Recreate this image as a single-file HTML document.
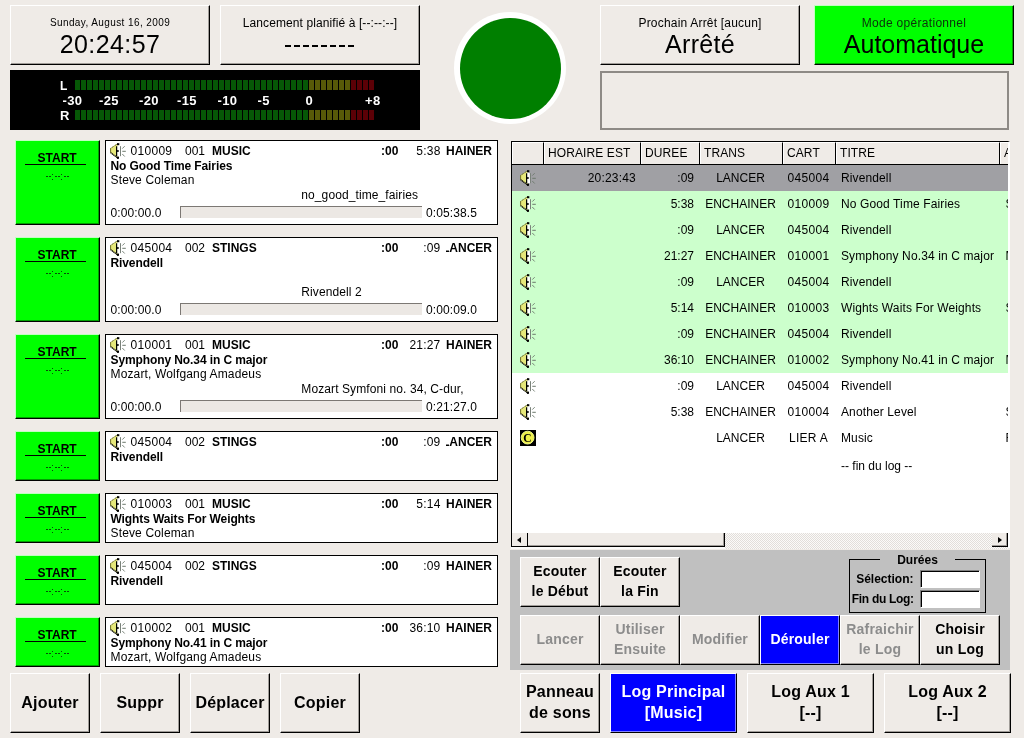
<!DOCTYPE html>
<html><head><meta charset="utf-8">
<style>
*{margin:0;padding:0;box-sizing:border-box}
html,body{width:1024px;height:738px;overflow:hidden;background:#efebe7;font-family:"Liberation Sans",sans-serif;color:#000}
#root{position:absolute;left:0;top:0;width:1024px;height:738px;background:#efebe7;will-change:transform;overflow:hidden}
.a{position:absolute}
.rz{position:absolute;background:#efebe7;border-top:1px solid #fff;border-left:1px solid #fff;border-right:1px solid #000;border-bottom:1px solid #000;box-shadow:inset -1px -1px 0 #a09c98}
.t{position:absolute;white-space:nowrap;line-height:1;font-variant-ligatures:none}
.b{font-weight:bold}
.c{text-align:center}
.r{text-align:right}
.clip{overflow:hidden}
</style></head><body><div id="root">

<div class="rz" style="left:10px;top:5px;width:200px;height:60px;"></div>
<div class="t c" style="left:10px;top:18.34px;width:200px;font-size:10px;letter-spacing:0.4px">Sunday, August 16, 2009</div>
<div class="t c" style="left:10px;top:31.84px;width:200px;font-size:25px;letter-spacing:0.4px">20:24:57</div>
<div class="rz" style="left:220px;top:5px;width:200px;height:60px;"></div>
<div class="t c" style="left:220px;top:16.84px;width:200px;font-size:12px;letter-spacing:0.1px">Lancement planifié à [--:--:--]</div>
<div class="a" style="left:285px;top:45px;width:6px;height:2px;background:#000;"></div>
<div class="a" style="left:294px;top:45px;width:6px;height:2px;background:#000;"></div>
<div class="a" style="left:303px;top:45px;width:6px;height:2px;background:#000;"></div>
<div class="a" style="left:312px;top:45px;width:6px;height:2px;background:#000;"></div>
<div class="a" style="left:321px;top:45px;width:6px;height:2px;background:#000;"></div>
<div class="a" style="left:330px;top:45px;width:6px;height:2px;background:#000;"></div>
<div class="a" style="left:339px;top:45px;width:6px;height:2px;background:#000;"></div>
<div class="a" style="left:348px;top:45px;width:6px;height:2px;background:#000;"></div>
<div class="a" style="left:10px;top:70px;width:410px;height:60px;background:#000;"></div>
<div class="a" style="left:75px;top:80px;width:5px;height:10px;background:#065806;"></div>
<div class="a" style="left:75px;top:110px;width:5px;height:10px;background:#065806;"></div>
<div class="a" style="left:81px;top:80px;width:5px;height:10px;background:#065806;"></div>
<div class="a" style="left:81px;top:110px;width:5px;height:10px;background:#065806;"></div>
<div class="a" style="left:87px;top:80px;width:5px;height:10px;background:#065806;"></div>
<div class="a" style="left:87px;top:110px;width:5px;height:10px;background:#065806;"></div>
<div class="a" style="left:93px;top:80px;width:5px;height:10px;background:#065806;"></div>
<div class="a" style="left:93px;top:110px;width:5px;height:10px;background:#065806;"></div>
<div class="a" style="left:99px;top:80px;width:5px;height:10px;background:#065806;"></div>
<div class="a" style="left:99px;top:110px;width:5px;height:10px;background:#065806;"></div>
<div class="a" style="left:105px;top:80px;width:5px;height:10px;background:#065806;"></div>
<div class="a" style="left:105px;top:110px;width:5px;height:10px;background:#065806;"></div>
<div class="a" style="left:111px;top:80px;width:5px;height:10px;background:#065806;"></div>
<div class="a" style="left:111px;top:110px;width:5px;height:10px;background:#065806;"></div>
<div class="a" style="left:117px;top:80px;width:5px;height:10px;background:#065806;"></div>
<div class="a" style="left:117px;top:110px;width:5px;height:10px;background:#065806;"></div>
<div class="a" style="left:123px;top:80px;width:5px;height:10px;background:#065806;"></div>
<div class="a" style="left:123px;top:110px;width:5px;height:10px;background:#065806;"></div>
<div class="a" style="left:129px;top:80px;width:5px;height:10px;background:#065806;"></div>
<div class="a" style="left:129px;top:110px;width:5px;height:10px;background:#065806;"></div>
<div class="a" style="left:135px;top:80px;width:5px;height:10px;background:#065806;"></div>
<div class="a" style="left:135px;top:110px;width:5px;height:10px;background:#065806;"></div>
<div class="a" style="left:141px;top:80px;width:5px;height:10px;background:#065806;"></div>
<div class="a" style="left:141px;top:110px;width:5px;height:10px;background:#065806;"></div>
<div class="a" style="left:147px;top:80px;width:5px;height:10px;background:#065806;"></div>
<div class="a" style="left:147px;top:110px;width:5px;height:10px;background:#065806;"></div>
<div class="a" style="left:153px;top:80px;width:5px;height:10px;background:#065806;"></div>
<div class="a" style="left:153px;top:110px;width:5px;height:10px;background:#065806;"></div>
<div class="a" style="left:159px;top:80px;width:5px;height:10px;background:#065806;"></div>
<div class="a" style="left:159px;top:110px;width:5px;height:10px;background:#065806;"></div>
<div class="a" style="left:165px;top:80px;width:5px;height:10px;background:#065806;"></div>
<div class="a" style="left:165px;top:110px;width:5px;height:10px;background:#065806;"></div>
<div class="a" style="left:171px;top:80px;width:5px;height:10px;background:#065806;"></div>
<div class="a" style="left:171px;top:110px;width:5px;height:10px;background:#065806;"></div>
<div class="a" style="left:177px;top:80px;width:5px;height:10px;background:#065806;"></div>
<div class="a" style="left:177px;top:110px;width:5px;height:10px;background:#065806;"></div>
<div class="a" style="left:183px;top:80px;width:5px;height:10px;background:#065806;"></div>
<div class="a" style="left:183px;top:110px;width:5px;height:10px;background:#065806;"></div>
<div class="a" style="left:189px;top:80px;width:5px;height:10px;background:#065806;"></div>
<div class="a" style="left:189px;top:110px;width:5px;height:10px;background:#065806;"></div>
<div class="a" style="left:195px;top:80px;width:5px;height:10px;background:#065806;"></div>
<div class="a" style="left:195px;top:110px;width:5px;height:10px;background:#065806;"></div>
<div class="a" style="left:201px;top:80px;width:5px;height:10px;background:#065806;"></div>
<div class="a" style="left:201px;top:110px;width:5px;height:10px;background:#065806;"></div>
<div class="a" style="left:207px;top:80px;width:5px;height:10px;background:#065806;"></div>
<div class="a" style="left:207px;top:110px;width:5px;height:10px;background:#065806;"></div>
<div class="a" style="left:213px;top:80px;width:5px;height:10px;background:#065806;"></div>
<div class="a" style="left:213px;top:110px;width:5px;height:10px;background:#065806;"></div>
<div class="a" style="left:219px;top:80px;width:5px;height:10px;background:#065806;"></div>
<div class="a" style="left:219px;top:110px;width:5px;height:10px;background:#065806;"></div>
<div class="a" style="left:225px;top:80px;width:5px;height:10px;background:#065806;"></div>
<div class="a" style="left:225px;top:110px;width:5px;height:10px;background:#065806;"></div>
<div class="a" style="left:231px;top:80px;width:5px;height:10px;background:#065806;"></div>
<div class="a" style="left:231px;top:110px;width:5px;height:10px;background:#065806;"></div>
<div class="a" style="left:237px;top:80px;width:5px;height:10px;background:#065806;"></div>
<div class="a" style="left:237px;top:110px;width:5px;height:10px;background:#065806;"></div>
<div class="a" style="left:243px;top:80px;width:5px;height:10px;background:#065806;"></div>
<div class="a" style="left:243px;top:110px;width:5px;height:10px;background:#065806;"></div>
<div class="a" style="left:249px;top:80px;width:5px;height:10px;background:#065806;"></div>
<div class="a" style="left:249px;top:110px;width:5px;height:10px;background:#065806;"></div>
<div class="a" style="left:255px;top:80px;width:5px;height:10px;background:#065806;"></div>
<div class="a" style="left:255px;top:110px;width:5px;height:10px;background:#065806;"></div>
<div class="a" style="left:261px;top:80px;width:5px;height:10px;background:#065806;"></div>
<div class="a" style="left:261px;top:110px;width:5px;height:10px;background:#065806;"></div>
<div class="a" style="left:267px;top:80px;width:5px;height:10px;background:#065806;"></div>
<div class="a" style="left:267px;top:110px;width:5px;height:10px;background:#065806;"></div>
<div class="a" style="left:273px;top:80px;width:5px;height:10px;background:#065806;"></div>
<div class="a" style="left:273px;top:110px;width:5px;height:10px;background:#065806;"></div>
<div class="a" style="left:279px;top:80px;width:5px;height:10px;background:#065806;"></div>
<div class="a" style="left:279px;top:110px;width:5px;height:10px;background:#065806;"></div>
<div class="a" style="left:285px;top:80px;width:5px;height:10px;background:#065806;"></div>
<div class="a" style="left:285px;top:110px;width:5px;height:10px;background:#065806;"></div>
<div class="a" style="left:291px;top:80px;width:5px;height:10px;background:#065806;"></div>
<div class="a" style="left:291px;top:110px;width:5px;height:10px;background:#065806;"></div>
<div class="a" style="left:297px;top:80px;width:5px;height:10px;background:#065806;"></div>
<div class="a" style="left:297px;top:110px;width:5px;height:10px;background:#065806;"></div>
<div class="a" style="left:303px;top:80px;width:5px;height:10px;background:#065806;"></div>
<div class="a" style="left:303px;top:110px;width:5px;height:10px;background:#065806;"></div>
<div class="a" style="left:309px;top:80px;width:5px;height:10px;background:#585a08;"></div>
<div class="a" style="left:309px;top:110px;width:5px;height:10px;background:#585a08;"></div>
<div class="a" style="left:315px;top:80px;width:5px;height:10px;background:#585a08;"></div>
<div class="a" style="left:315px;top:110px;width:5px;height:10px;background:#585a08;"></div>
<div class="a" style="left:321px;top:80px;width:5px;height:10px;background:#585a08;"></div>
<div class="a" style="left:321px;top:110px;width:5px;height:10px;background:#585a08;"></div>
<div class="a" style="left:327px;top:80px;width:5px;height:10px;background:#585a08;"></div>
<div class="a" style="left:327px;top:110px;width:5px;height:10px;background:#585a08;"></div>
<div class="a" style="left:333px;top:80px;width:5px;height:10px;background:#585a08;"></div>
<div class="a" style="left:333px;top:110px;width:5px;height:10px;background:#585a08;"></div>
<div class="a" style="left:339px;top:80px;width:5px;height:10px;background:#585a08;"></div>
<div class="a" style="left:339px;top:110px;width:5px;height:10px;background:#585a08;"></div>
<div class="a" style="left:345px;top:80px;width:5px;height:10px;background:#585a08;"></div>
<div class="a" style="left:345px;top:110px;width:5px;height:10px;background:#585a08;"></div>
<div class="a" style="left:351px;top:80px;width:5px;height:10px;background:#5c0006;"></div>
<div class="a" style="left:351px;top:110px;width:5px;height:10px;background:#5c0006;"></div>
<div class="a" style="left:357px;top:80px;width:5px;height:10px;background:#5c0006;"></div>
<div class="a" style="left:357px;top:110px;width:5px;height:10px;background:#5c0006;"></div>
<div class="a" style="left:363px;top:80px;width:5px;height:10px;background:#5c0006;"></div>
<div class="a" style="left:363px;top:110px;width:5px;height:10px;background:#5c0006;"></div>
<div class="a" style="left:369px;top:80px;width:5px;height:10px;background:#5c0006;"></div>
<div class="a" style="left:369px;top:110px;width:5px;height:10px;background:#5c0006;"></div>
<div class="t b" style="left:60px;top:79.84px;font-size:12px;color:#fff">L</div>
<div class="t b" style="left:60px;top:109.0px;font-size:13px;color:#fff">R</div>
<div class="t b" style="left:62.5px;top:94.0px;font-size:13px;color:#fff;letter-spacing:0.3px">-30</div>
<div class="t b" style="left:99px;top:94.0px;font-size:13px;color:#fff;letter-spacing:0.3px">-25</div>
<div class="t b" style="left:139px;top:94.0px;font-size:13px;color:#fff;letter-spacing:0.3px">-20</div>
<div class="t b" style="left:177px;top:94.0px;font-size:13px;color:#fff;letter-spacing:0.3px">-15</div>
<div class="t b" style="left:217.5px;top:94.0px;font-size:13px;color:#fff;letter-spacing:0.3px">-10</div>
<div class="t b" style="left:257.5px;top:94.0px;font-size:13px;color:#fff;letter-spacing:0.3px">-5</div>
<div class="t b" style="left:305.5px;top:94.0px;font-size:13px;color:#fff;letter-spacing:0.3px">0</div>
<div class="t b" style="left:365px;top:94.0px;font-size:13px;color:#fff;letter-spacing:0.3px">+8</div>
<div class="a" style="left:454px;top:12px;width:112px;height:112px;border-radius:50%;background:#fff"></div>
<div class="a" style="left:459.5px;top:17.5px;width:101px;height:101px;border-radius:50%;background:#007f00"></div>
<div class="rz" style="left:600px;top:5px;width:200px;height:60px;"></div>
<div class="t c" style="left:600px;top:16.64px;width:200px;font-size:12px;letter-spacing:0.2px">Prochain Arrêt [aucun]</div>
<div class="t c" style="left:600px;top:32.14px;width:200px;font-size:25px;letter-spacing:0.3px">Arrêté</div>
<div class="rz" style="left:814px;top:5px;width:200px;height:60px;background:#00ff00;border-top-color:#c0ffc0;border-left-color:#c0ffc0;box-shadow:inset -1px -1px 0 #00a000"></div>
<div class="t c" style="left:814px;top:16.64px;width:200px;font-size:12px;color:#0c300c;letter-spacing:0.3px">Mode opérationnel</div>
<div class="t c" style="left:814px;top:31.84px;width:200px;font-size:25px;">Automatique</div>
<div class="a" style="left:600px;top:71px;width:409px;height:59px;border:2px solid #8e8a86"></div>
<div class="rz" style="left:15px;top:140px;width:85px;height:85px;background:#00ff00;border-top-color:#c0ffc0;border-left-color:#c0ffc0;box-shadow:inset -1px -1px 0 #00a000"></div>
<div class="t b c" style="left:14.6px;top:151.84px;width:85px;font-size:12px;">START</div>
<div class="a" style="left:25px;top:164px;width:61px;height:1px;background:#000;"></div>
<div class="a" style="left:46px;top:176px;width:2px;height:1px;background:#084808;"></div>
<div class="a" style="left:49px;top:176px;width:2px;height:1px;background:#084808;"></div>
<div class="a" style="left:55px;top:176px;width:2px;height:1px;background:#084808;"></div>
<div class="a" style="left:58px;top:176px;width:2px;height:1px;background:#084808;"></div>
<div class="a" style="left:64px;top:176px;width:2px;height:1px;background:#084808;"></div>
<div class="a" style="left:67px;top:176px;width:2px;height:1px;background:#084808;"></div>
<div class="a" style="left:52px;top:174px;width:1px;height:1px;background:#084808;"></div>
<div class="a" style="left:52px;top:179px;width:1px;height:1px;background:#084808;"></div>
<div class="a" style="left:61px;top:174px;width:1px;height:1px;background:#084808;"></div>
<div class="a" style="left:61px;top:179px;width:1px;height:1px;background:#084808;"></div>
<div class="a" style="left:105px;top:140px;width:393px;height:85px;background:#fff;border:1px solid #000"></div>
<svg class="a" style="left:110px;top:143px" width="17" height="17" viewBox="0 0 17 17"><polygon points="0.4,5.4 7.6,0.6 8,15.6 0.4,9.6" fill="#e6e87a"/><line x1="0.4" y1="5.5" x2="7.8" y2="0.6" stroke="#5a5a20" stroke-width="1" stroke-dasharray="1.2,0.6"/><line x1="0.4" y1="9.5" x2="8.2" y2="15.4" stroke="#000" stroke-width="1.2" stroke-dasharray="1.4,0.4"/><line x1="0.6" y1="5.4" x2="0.6" y2="9.6" stroke="#6a6a28" stroke-width="1"/><path d="M7.2,2.5 L9.8,3.2 L10,13.2 L7.2,13.6 Z" fill="#fff"/><line x1="6.6" y1="3.2" x2="6.6" y2="13.2" stroke="#000" stroke-width="1.2"/><rect x="7" y="0.2" width="2.3" height="2" fill="#000"/><rect x="7" y="13.6" width="2" height="2.2" fill="#000"/><circle cx="7.9" cy="7.9" r="1" fill="#000"/><line x1="10.5" y1="3.2" x2="10.5" y2="13.2" stroke="#7a827a" stroke-width="1"/><line x1="12.3" y1="5.6" x2="14.7" y2="3.2" stroke="#6c786c" stroke-width="0.9"/><line x1="12.3" y1="8.3" x2="15.8" y2="8.3" stroke="#6c786c" stroke-width="1"/><line x1="12.3" y1="11" x2="14.7" y2="13.5" stroke="#6c786c" stroke-width="0.9"/></svg>
<div class="t " style="left:130.5px;top:144.64px;font-size:12px;letter-spacing:0.3px">010009</div>
<div class="t " style="left:185px;top:144.64px;font-size:12px;">001</div>
<div class="t b" style="left:212px;top:144.64px;font-size:12px;">MUSIC</div>
<div class="t b" style="left:381px;top:144.64px;font-size:12px;">:00</div>
<div class="t r" style="left:390px;top:144.64px;width:50.5px;font-size:12px;letter-spacing:0.2px">5:38</div>
<div class="t b clip" style="left:446px;top:144.64px;width:46px;font-size:12px;direction:rtl;height:14px">ENCHAINER</div>
<div class="t b" style="left:110.5px;top:159.54px;font-size:12px;letter-spacing:-0.1px">No Good Time Fairies</div>
<div class="t " style="left:110.5px;top:174.44px;font-size:12px;letter-spacing:0.15px">Steve Coleman</div>
<div class="t " style="left:301.3px;top:188.84px;font-size:12px;letter-spacing:0.1px">no_good_time_fairies</div>
<div class="a" style="left:180px;top:206px;width:242px;height:12px;background:#ece8e4;border-top:1px solid #7c7874;border-left:1px solid #7c7874"></div>
<div class="t " style="left:110.5px;top:206.64px;font-size:12px;letter-spacing:0.1px">0:00:00.0</div>
<div class="t " style="left:426px;top:206.64px;font-size:12px;letter-spacing:0.1px">0:05:38.5</div>
<div class="rz" style="left:15px;top:237px;width:85px;height:85px;background:#00ff00;border-top-color:#c0ffc0;border-left-color:#c0ffc0;box-shadow:inset -1px -1px 0 #00a000"></div>
<div class="t b c" style="left:14.6px;top:248.84px;width:85px;font-size:12px;">START</div>
<div class="a" style="left:25px;top:261px;width:61px;height:1px;background:#000;"></div>
<div class="a" style="left:46px;top:273px;width:2px;height:1px;background:#084808;"></div>
<div class="a" style="left:49px;top:273px;width:2px;height:1px;background:#084808;"></div>
<div class="a" style="left:55px;top:273px;width:2px;height:1px;background:#084808;"></div>
<div class="a" style="left:58px;top:273px;width:2px;height:1px;background:#084808;"></div>
<div class="a" style="left:64px;top:273px;width:2px;height:1px;background:#084808;"></div>
<div class="a" style="left:67px;top:273px;width:2px;height:1px;background:#084808;"></div>
<div class="a" style="left:52px;top:271px;width:1px;height:1px;background:#084808;"></div>
<div class="a" style="left:52px;top:276px;width:1px;height:1px;background:#084808;"></div>
<div class="a" style="left:61px;top:271px;width:1px;height:1px;background:#084808;"></div>
<div class="a" style="left:61px;top:276px;width:1px;height:1px;background:#084808;"></div>
<div class="a" style="left:105px;top:237px;width:393px;height:85px;background:#fff;border:1px solid #000"></div>
<svg class="a" style="left:110px;top:240px" width="17" height="17" viewBox="0 0 17 17"><polygon points="0.4,5.4 7.6,0.6 8,15.6 0.4,9.6" fill="#e6e87a"/><line x1="0.4" y1="5.5" x2="7.8" y2="0.6" stroke="#5a5a20" stroke-width="1" stroke-dasharray="1.2,0.6"/><line x1="0.4" y1="9.5" x2="8.2" y2="15.4" stroke="#000" stroke-width="1.2" stroke-dasharray="1.4,0.4"/><line x1="0.6" y1="5.4" x2="0.6" y2="9.6" stroke="#6a6a28" stroke-width="1"/><path d="M7.2,2.5 L9.8,3.2 L10,13.2 L7.2,13.6 Z" fill="#fff"/><line x1="6.6" y1="3.2" x2="6.6" y2="13.2" stroke="#000" stroke-width="1.2"/><rect x="7" y="0.2" width="2.3" height="2" fill="#000"/><rect x="7" y="13.6" width="2" height="2.2" fill="#000"/><circle cx="7.9" cy="7.9" r="1" fill="#000"/><line x1="10.5" y1="3.2" x2="10.5" y2="13.2" stroke="#7a827a" stroke-width="1"/><line x1="12.3" y1="5.6" x2="14.7" y2="3.2" stroke="#6c786c" stroke-width="0.9"/><line x1="12.3" y1="8.3" x2="15.8" y2="8.3" stroke="#6c786c" stroke-width="1"/><line x1="12.3" y1="11" x2="14.7" y2="13.5" stroke="#6c786c" stroke-width="0.9"/></svg>
<div class="t " style="left:130.5px;top:241.64px;font-size:12px;letter-spacing:0.3px">045004</div>
<div class="t " style="left:185px;top:241.64px;font-size:12px;">002</div>
<div class="t b" style="left:212px;top:241.64px;font-size:12px;">STINGS</div>
<div class="t b" style="left:381px;top:241.64px;font-size:12px;">:00</div>
<div class="t r" style="left:390px;top:241.64px;width:50.5px;font-size:12px;letter-spacing:0.2px">:09</div>
<div class="t b clip" style="left:446px;top:241.64px;width:46px;font-size:12px;direction:rtl;height:14px">LANCER</div>
<div class="t b" style="left:110.5px;top:256.54px;font-size:12px;letter-spacing:-0.1px">Rivendell</div>
<div class="t " style="left:301.3px;top:285.84px;font-size:12px;letter-spacing:0.1px">Rivendell 2</div>
<div class="a" style="left:180px;top:303px;width:242px;height:12px;background:#ece8e4;border-top:1px solid #7c7874;border-left:1px solid #7c7874"></div>
<div class="t " style="left:110.5px;top:303.64px;font-size:12px;letter-spacing:0.1px">0:00:00.0</div>
<div class="t " style="left:426px;top:303.64px;font-size:12px;letter-spacing:0.1px">0:00:09.0</div>
<div class="rz" style="left:15px;top:334px;width:85px;height:85px;background:#00ff00;border-top-color:#c0ffc0;border-left-color:#c0ffc0;box-shadow:inset -1px -1px 0 #00a000"></div>
<div class="t b c" style="left:14.6px;top:345.84px;width:85px;font-size:12px;">START</div>
<div class="a" style="left:25px;top:358px;width:61px;height:1px;background:#000;"></div>
<div class="a" style="left:46px;top:370px;width:2px;height:1px;background:#084808;"></div>
<div class="a" style="left:49px;top:370px;width:2px;height:1px;background:#084808;"></div>
<div class="a" style="left:55px;top:370px;width:2px;height:1px;background:#084808;"></div>
<div class="a" style="left:58px;top:370px;width:2px;height:1px;background:#084808;"></div>
<div class="a" style="left:64px;top:370px;width:2px;height:1px;background:#084808;"></div>
<div class="a" style="left:67px;top:370px;width:2px;height:1px;background:#084808;"></div>
<div class="a" style="left:52px;top:368px;width:1px;height:1px;background:#084808;"></div>
<div class="a" style="left:52px;top:373px;width:1px;height:1px;background:#084808;"></div>
<div class="a" style="left:61px;top:368px;width:1px;height:1px;background:#084808;"></div>
<div class="a" style="left:61px;top:373px;width:1px;height:1px;background:#084808;"></div>
<div class="a" style="left:105px;top:334px;width:393px;height:85px;background:#fff;border:1px solid #000"></div>
<svg class="a" style="left:110px;top:337px" width="17" height="17" viewBox="0 0 17 17"><polygon points="0.4,5.4 7.6,0.6 8,15.6 0.4,9.6" fill="#e6e87a"/><line x1="0.4" y1="5.5" x2="7.8" y2="0.6" stroke="#5a5a20" stroke-width="1" stroke-dasharray="1.2,0.6"/><line x1="0.4" y1="9.5" x2="8.2" y2="15.4" stroke="#000" stroke-width="1.2" stroke-dasharray="1.4,0.4"/><line x1="0.6" y1="5.4" x2="0.6" y2="9.6" stroke="#6a6a28" stroke-width="1"/><path d="M7.2,2.5 L9.8,3.2 L10,13.2 L7.2,13.6 Z" fill="#fff"/><line x1="6.6" y1="3.2" x2="6.6" y2="13.2" stroke="#000" stroke-width="1.2"/><rect x="7" y="0.2" width="2.3" height="2" fill="#000"/><rect x="7" y="13.6" width="2" height="2.2" fill="#000"/><circle cx="7.9" cy="7.9" r="1" fill="#000"/><line x1="10.5" y1="3.2" x2="10.5" y2="13.2" stroke="#7a827a" stroke-width="1"/><line x1="12.3" y1="5.6" x2="14.7" y2="3.2" stroke="#6c786c" stroke-width="0.9"/><line x1="12.3" y1="8.3" x2="15.8" y2="8.3" stroke="#6c786c" stroke-width="1"/><line x1="12.3" y1="11" x2="14.7" y2="13.5" stroke="#6c786c" stroke-width="0.9"/></svg>
<div class="t " style="left:130.5px;top:338.64px;font-size:12px;letter-spacing:0.3px">010001</div>
<div class="t " style="left:185px;top:338.64px;font-size:12px;">001</div>
<div class="t b" style="left:212px;top:338.64px;font-size:12px;">MUSIC</div>
<div class="t b" style="left:381px;top:338.64px;font-size:12px;">:00</div>
<div class="t r" style="left:390px;top:338.64px;width:50.5px;font-size:12px;letter-spacing:0.2px">21:27</div>
<div class="t b clip" style="left:446px;top:338.64px;width:46px;font-size:12px;direction:rtl;height:14px">ENCHAINER</div>
<div class="t b" style="left:110.5px;top:353.54px;font-size:12px;letter-spacing:-0.1px">Symphony No.34 in C major</div>
<div class="t " style="left:110.5px;top:368.44px;font-size:12px;letter-spacing:0.15px">Mozart, Wolfgang Amadeus</div>
<div class="t " style="left:301.3px;top:382.84px;font-size:12px;letter-spacing:0.1px">Mozart Symfoni no. 34, C-dur,</div>
<div class="a" style="left:180px;top:400px;width:242px;height:12px;background:#ece8e4;border-top:1px solid #7c7874;border-left:1px solid #7c7874"></div>
<div class="t " style="left:110.5px;top:400.64px;font-size:12px;letter-spacing:0.1px">0:00:00.0</div>
<div class="t " style="left:426px;top:400.64px;font-size:12px;letter-spacing:0.1px">0:21:27.0</div>
<div class="rz" style="left:15px;top:431px;width:85px;height:50px;background:#00ff00;border-top-color:#c0ffc0;border-left-color:#c0ffc0;box-shadow:inset -1px -1px 0 #00a000"></div>
<div class="t b c" style="left:14.6px;top:442.84px;width:85px;font-size:12px;">START</div>
<div class="a" style="left:25px;top:455px;width:61px;height:1px;background:#000;"></div>
<div class="a" style="left:46px;top:467px;width:2px;height:1px;background:#084808;"></div>
<div class="a" style="left:49px;top:467px;width:2px;height:1px;background:#084808;"></div>
<div class="a" style="left:55px;top:467px;width:2px;height:1px;background:#084808;"></div>
<div class="a" style="left:58px;top:467px;width:2px;height:1px;background:#084808;"></div>
<div class="a" style="left:64px;top:467px;width:2px;height:1px;background:#084808;"></div>
<div class="a" style="left:67px;top:467px;width:2px;height:1px;background:#084808;"></div>
<div class="a" style="left:52px;top:465px;width:1px;height:1px;background:#084808;"></div>
<div class="a" style="left:52px;top:470px;width:1px;height:1px;background:#084808;"></div>
<div class="a" style="left:61px;top:465px;width:1px;height:1px;background:#084808;"></div>
<div class="a" style="left:61px;top:470px;width:1px;height:1px;background:#084808;"></div>
<div class="a" style="left:105px;top:431px;width:393px;height:50px;background:#fff;border:1px solid #000"></div>
<svg class="a" style="left:110px;top:434px" width="17" height="17" viewBox="0 0 17 17"><polygon points="0.4,5.4 7.6,0.6 8,15.6 0.4,9.6" fill="#e6e87a"/><line x1="0.4" y1="5.5" x2="7.8" y2="0.6" stroke="#5a5a20" stroke-width="1" stroke-dasharray="1.2,0.6"/><line x1="0.4" y1="9.5" x2="8.2" y2="15.4" stroke="#000" stroke-width="1.2" stroke-dasharray="1.4,0.4"/><line x1="0.6" y1="5.4" x2="0.6" y2="9.6" stroke="#6a6a28" stroke-width="1"/><path d="M7.2,2.5 L9.8,3.2 L10,13.2 L7.2,13.6 Z" fill="#fff"/><line x1="6.6" y1="3.2" x2="6.6" y2="13.2" stroke="#000" stroke-width="1.2"/><rect x="7" y="0.2" width="2.3" height="2" fill="#000"/><rect x="7" y="13.6" width="2" height="2.2" fill="#000"/><circle cx="7.9" cy="7.9" r="1" fill="#000"/><line x1="10.5" y1="3.2" x2="10.5" y2="13.2" stroke="#7a827a" stroke-width="1"/><line x1="12.3" y1="5.6" x2="14.7" y2="3.2" stroke="#6c786c" stroke-width="0.9"/><line x1="12.3" y1="8.3" x2="15.8" y2="8.3" stroke="#6c786c" stroke-width="1"/><line x1="12.3" y1="11" x2="14.7" y2="13.5" stroke="#6c786c" stroke-width="0.9"/></svg>
<div class="t " style="left:130.5px;top:435.64px;font-size:12px;letter-spacing:0.3px">045004</div>
<div class="t " style="left:185px;top:435.64px;font-size:12px;">002</div>
<div class="t b" style="left:212px;top:435.64px;font-size:12px;">STINGS</div>
<div class="t b" style="left:381px;top:435.64px;font-size:12px;">:00</div>
<div class="t r" style="left:390px;top:435.64px;width:50.5px;font-size:12px;letter-spacing:0.2px">:09</div>
<div class="t b clip" style="left:446px;top:435.64px;width:46px;font-size:12px;direction:rtl;height:14px">LANCER</div>
<div class="t b" style="left:110.5px;top:450.54px;font-size:12px;letter-spacing:-0.1px">Rivendell</div>
<div class="rz" style="left:15px;top:493px;width:85px;height:50px;background:#00ff00;border-top-color:#c0ffc0;border-left-color:#c0ffc0;box-shadow:inset -1px -1px 0 #00a000"></div>
<div class="t b c" style="left:14.6px;top:504.84px;width:85px;font-size:12px;">START</div>
<div class="a" style="left:25px;top:517px;width:61px;height:1px;background:#000;"></div>
<div class="a" style="left:46px;top:529px;width:2px;height:1px;background:#084808;"></div>
<div class="a" style="left:49px;top:529px;width:2px;height:1px;background:#084808;"></div>
<div class="a" style="left:55px;top:529px;width:2px;height:1px;background:#084808;"></div>
<div class="a" style="left:58px;top:529px;width:2px;height:1px;background:#084808;"></div>
<div class="a" style="left:64px;top:529px;width:2px;height:1px;background:#084808;"></div>
<div class="a" style="left:67px;top:529px;width:2px;height:1px;background:#084808;"></div>
<div class="a" style="left:52px;top:527px;width:1px;height:1px;background:#084808;"></div>
<div class="a" style="left:52px;top:532px;width:1px;height:1px;background:#084808;"></div>
<div class="a" style="left:61px;top:527px;width:1px;height:1px;background:#084808;"></div>
<div class="a" style="left:61px;top:532px;width:1px;height:1px;background:#084808;"></div>
<div class="a" style="left:105px;top:493px;width:393px;height:50px;background:#fff;border:1px solid #000"></div>
<svg class="a" style="left:110px;top:496px" width="17" height="17" viewBox="0 0 17 17"><polygon points="0.4,5.4 7.6,0.6 8,15.6 0.4,9.6" fill="#e6e87a"/><line x1="0.4" y1="5.5" x2="7.8" y2="0.6" stroke="#5a5a20" stroke-width="1" stroke-dasharray="1.2,0.6"/><line x1="0.4" y1="9.5" x2="8.2" y2="15.4" stroke="#000" stroke-width="1.2" stroke-dasharray="1.4,0.4"/><line x1="0.6" y1="5.4" x2="0.6" y2="9.6" stroke="#6a6a28" stroke-width="1"/><path d="M7.2,2.5 L9.8,3.2 L10,13.2 L7.2,13.6 Z" fill="#fff"/><line x1="6.6" y1="3.2" x2="6.6" y2="13.2" stroke="#000" stroke-width="1.2"/><rect x="7" y="0.2" width="2.3" height="2" fill="#000"/><rect x="7" y="13.6" width="2" height="2.2" fill="#000"/><circle cx="7.9" cy="7.9" r="1" fill="#000"/><line x1="10.5" y1="3.2" x2="10.5" y2="13.2" stroke="#7a827a" stroke-width="1"/><line x1="12.3" y1="5.6" x2="14.7" y2="3.2" stroke="#6c786c" stroke-width="0.9"/><line x1="12.3" y1="8.3" x2="15.8" y2="8.3" stroke="#6c786c" stroke-width="1"/><line x1="12.3" y1="11" x2="14.7" y2="13.5" stroke="#6c786c" stroke-width="0.9"/></svg>
<div class="t " style="left:130.5px;top:497.64px;font-size:12px;letter-spacing:0.3px">010003</div>
<div class="t " style="left:185px;top:497.64px;font-size:12px;">001</div>
<div class="t b" style="left:212px;top:497.64px;font-size:12px;">MUSIC</div>
<div class="t b" style="left:381px;top:497.64px;font-size:12px;">:00</div>
<div class="t r" style="left:390px;top:497.64px;width:50.5px;font-size:12px;letter-spacing:0.2px">5:14</div>
<div class="t b clip" style="left:446px;top:497.64px;width:46px;font-size:12px;direction:rtl;height:14px">ENCHAINER</div>
<div class="t b" style="left:110.5px;top:512.54px;font-size:12px;letter-spacing:-0.1px">Wights Waits For Weights</div>
<div class="t " style="left:110.5px;top:527.44px;font-size:12px;letter-spacing:0.15px">Steve Coleman</div>
<div class="rz" style="left:15px;top:555px;width:85px;height:50px;background:#00ff00;border-top-color:#c0ffc0;border-left-color:#c0ffc0;box-shadow:inset -1px -1px 0 #00a000"></div>
<div class="t b c" style="left:14.6px;top:566.84px;width:85px;font-size:12px;">START</div>
<div class="a" style="left:25px;top:579px;width:61px;height:1px;background:#000;"></div>
<div class="a" style="left:46px;top:591px;width:2px;height:1px;background:#084808;"></div>
<div class="a" style="left:49px;top:591px;width:2px;height:1px;background:#084808;"></div>
<div class="a" style="left:55px;top:591px;width:2px;height:1px;background:#084808;"></div>
<div class="a" style="left:58px;top:591px;width:2px;height:1px;background:#084808;"></div>
<div class="a" style="left:64px;top:591px;width:2px;height:1px;background:#084808;"></div>
<div class="a" style="left:67px;top:591px;width:2px;height:1px;background:#084808;"></div>
<div class="a" style="left:52px;top:589px;width:1px;height:1px;background:#084808;"></div>
<div class="a" style="left:52px;top:594px;width:1px;height:1px;background:#084808;"></div>
<div class="a" style="left:61px;top:589px;width:1px;height:1px;background:#084808;"></div>
<div class="a" style="left:61px;top:594px;width:1px;height:1px;background:#084808;"></div>
<div class="a" style="left:105px;top:555px;width:393px;height:50px;background:#fff;border:1px solid #000"></div>
<svg class="a" style="left:110px;top:558px" width="17" height="17" viewBox="0 0 17 17"><polygon points="0.4,5.4 7.6,0.6 8,15.6 0.4,9.6" fill="#e6e87a"/><line x1="0.4" y1="5.5" x2="7.8" y2="0.6" stroke="#5a5a20" stroke-width="1" stroke-dasharray="1.2,0.6"/><line x1="0.4" y1="9.5" x2="8.2" y2="15.4" stroke="#000" stroke-width="1.2" stroke-dasharray="1.4,0.4"/><line x1="0.6" y1="5.4" x2="0.6" y2="9.6" stroke="#6a6a28" stroke-width="1"/><path d="M7.2,2.5 L9.8,3.2 L10,13.2 L7.2,13.6 Z" fill="#fff"/><line x1="6.6" y1="3.2" x2="6.6" y2="13.2" stroke="#000" stroke-width="1.2"/><rect x="7" y="0.2" width="2.3" height="2" fill="#000"/><rect x="7" y="13.6" width="2" height="2.2" fill="#000"/><circle cx="7.9" cy="7.9" r="1" fill="#000"/><line x1="10.5" y1="3.2" x2="10.5" y2="13.2" stroke="#7a827a" stroke-width="1"/><line x1="12.3" y1="5.6" x2="14.7" y2="3.2" stroke="#6c786c" stroke-width="0.9"/><line x1="12.3" y1="8.3" x2="15.8" y2="8.3" stroke="#6c786c" stroke-width="1"/><line x1="12.3" y1="11" x2="14.7" y2="13.5" stroke="#6c786c" stroke-width="0.9"/></svg>
<div class="t " style="left:130.5px;top:559.64px;font-size:12px;letter-spacing:0.3px">045004</div>
<div class="t " style="left:185px;top:559.64px;font-size:12px;">002</div>
<div class="t b" style="left:212px;top:559.64px;font-size:12px;">STINGS</div>
<div class="t b" style="left:381px;top:559.64px;font-size:12px;">:00</div>
<div class="t r" style="left:390px;top:559.64px;width:50.5px;font-size:12px;letter-spacing:0.2px">:09</div>
<div class="t b clip" style="left:446px;top:559.64px;width:46px;font-size:12px;direction:rtl;height:14px">ENCHAINER</div>
<div class="t b" style="left:110.5px;top:574.54px;font-size:12px;letter-spacing:-0.1px">Rivendell</div>
<div class="rz" style="left:15px;top:617px;width:85px;height:50px;background:#00ff00;border-top-color:#c0ffc0;border-left-color:#c0ffc0;box-shadow:inset -1px -1px 0 #00a000"></div>
<div class="t b c" style="left:14.6px;top:628.84px;width:85px;font-size:12px;">START</div>
<div class="a" style="left:25px;top:641px;width:61px;height:1px;background:#000;"></div>
<div class="a" style="left:46px;top:653px;width:2px;height:1px;background:#084808;"></div>
<div class="a" style="left:49px;top:653px;width:2px;height:1px;background:#084808;"></div>
<div class="a" style="left:55px;top:653px;width:2px;height:1px;background:#084808;"></div>
<div class="a" style="left:58px;top:653px;width:2px;height:1px;background:#084808;"></div>
<div class="a" style="left:64px;top:653px;width:2px;height:1px;background:#084808;"></div>
<div class="a" style="left:67px;top:653px;width:2px;height:1px;background:#084808;"></div>
<div class="a" style="left:52px;top:651px;width:1px;height:1px;background:#084808;"></div>
<div class="a" style="left:52px;top:656px;width:1px;height:1px;background:#084808;"></div>
<div class="a" style="left:61px;top:651px;width:1px;height:1px;background:#084808;"></div>
<div class="a" style="left:61px;top:656px;width:1px;height:1px;background:#084808;"></div>
<div class="a" style="left:105px;top:617px;width:393px;height:50px;background:#fff;border:1px solid #000"></div>
<svg class="a" style="left:110px;top:620px" width="17" height="17" viewBox="0 0 17 17"><polygon points="0.4,5.4 7.6,0.6 8,15.6 0.4,9.6" fill="#e6e87a"/><line x1="0.4" y1="5.5" x2="7.8" y2="0.6" stroke="#5a5a20" stroke-width="1" stroke-dasharray="1.2,0.6"/><line x1="0.4" y1="9.5" x2="8.2" y2="15.4" stroke="#000" stroke-width="1.2" stroke-dasharray="1.4,0.4"/><line x1="0.6" y1="5.4" x2="0.6" y2="9.6" stroke="#6a6a28" stroke-width="1"/><path d="M7.2,2.5 L9.8,3.2 L10,13.2 L7.2,13.6 Z" fill="#fff"/><line x1="6.6" y1="3.2" x2="6.6" y2="13.2" stroke="#000" stroke-width="1.2"/><rect x="7" y="0.2" width="2.3" height="2" fill="#000"/><rect x="7" y="13.6" width="2" height="2.2" fill="#000"/><circle cx="7.9" cy="7.9" r="1" fill="#000"/><line x1="10.5" y1="3.2" x2="10.5" y2="13.2" stroke="#7a827a" stroke-width="1"/><line x1="12.3" y1="5.6" x2="14.7" y2="3.2" stroke="#6c786c" stroke-width="0.9"/><line x1="12.3" y1="8.3" x2="15.8" y2="8.3" stroke="#6c786c" stroke-width="1"/><line x1="12.3" y1="11" x2="14.7" y2="13.5" stroke="#6c786c" stroke-width="0.9"/></svg>
<div class="t " style="left:130.5px;top:621.64px;font-size:12px;letter-spacing:0.3px">010002</div>
<div class="t " style="left:185px;top:621.64px;font-size:12px;">001</div>
<div class="t b" style="left:212px;top:621.64px;font-size:12px;">MUSIC</div>
<div class="t b" style="left:381px;top:621.64px;font-size:12px;">:00</div>
<div class="t r" style="left:390px;top:621.64px;width:50.5px;font-size:12px;letter-spacing:0.2px">36:10</div>
<div class="t b clip" style="left:446px;top:621.64px;width:46px;font-size:12px;direction:rtl;height:14px">ENCHAINER</div>
<div class="t b" style="left:110.5px;top:636.54px;font-size:12px;letter-spacing:-0.1px">Symphony No.41 in C major</div>
<div class="t " style="left:110.5px;top:651.44px;font-size:12px;letter-spacing:0.15px">Mozart, Wolfgang Amadeus</div>
<div class="a" style="left:511px;top:141px;width:499px;height:407px;background:#fff;border:1px solid #000;border-right:2px solid #fff;border-bottom:1px solid #fff;box-shadow:inset 0 -1px 0 #000"></div>
<div class="a clip" style="left:512px;top:142px;width:496px;height:23px;border-bottom:1px solid #000;background:#efebe7">
<div class="a clip" style="left:0px;top:0;width:32px;height:22px;border-left:1px solid #fff;border-top:1px solid #fff;border-right:1px solid #000">
</div>
<div class="a clip" style="left:32px;top:0;width:97px;height:22px;border-left:1px solid #fff;border-top:1px solid #fff;border-right:1px solid #000">
<div class="t" style="left:3px;top:4px;font-size:12px;letter-spacing:0.1px">HORAIRE EST</div>
</div>
<div class="a clip" style="left:129px;top:0;width:59px;height:22px;border-left:1px solid #fff;border-top:1px solid #fff;border-right:1px solid #000">
<div class="t" style="left:3px;top:4px;font-size:12px;letter-spacing:0.1px">DUREE</div>
</div>
<div class="a clip" style="left:188px;top:0;width:83px;height:22px;border-left:1px solid #fff;border-top:1px solid #fff;border-right:1px solid #000">
<div class="t" style="left:3px;top:4px;font-size:12px;letter-spacing:0.1px">TRANS</div>
</div>
<div class="a clip" style="left:271px;top:0;width:53px;height:22px;border-left:1px solid #fff;border-top:1px solid #fff;border-right:1px solid #000">
<div class="t" style="left:3px;top:4px;font-size:12px;letter-spacing:0.1px">CART</div>
</div>
<div class="a clip" style="left:324px;top:0;width:164px;height:22px;border-left:1px solid #fff;border-top:1px solid #fff;border-right:1px solid #000">
<div class="t" style="left:3px;top:4px;font-size:12px;letter-spacing:0.1px">TITRE</div>
</div>
<div class="a clip" style="left:488px;top:0;width:31px;height:22px;border-left:1px solid #fff;border-top:1px solid #fff;border-right:1px solid #000">
<div class="t" style="left:3px;top:4px;font-size:12px;letter-spacing:0.1px">A</div>
</div>
</div>
<div class="a clip" style="left:512px;top:165px;width:496px;height:368px">
<div class="a" style="left:0;top:0px;width:496px;height:26px;background:#a0a0a4">
<svg class="a" style="left:8px;top:5px" width="17" height="17" viewBox="0 0 17 17"><polygon points="0.4,5.4 7.6,0.6 8,15.6 0.4,9.6" fill="#e6e87a"/><line x1="0.4" y1="5.5" x2="7.8" y2="0.6" stroke="#5a5a20" stroke-width="1" stroke-dasharray="1.2,0.6"/><line x1="0.4" y1="9.5" x2="8.2" y2="15.4" stroke="#000" stroke-width="1.2" stroke-dasharray="1.4,0.4"/><line x1="0.6" y1="5.4" x2="0.6" y2="9.6" stroke="#6a6a28" stroke-width="1"/><path d="M7.2,2.5 L9.8,3.2 L10,13.2 L7.2,13.6 Z" fill="#fff"/><line x1="6.6" y1="3.2" x2="6.6" y2="13.2" stroke="#000" stroke-width="1.2"/><rect x="7" y="0.2" width="2.3" height="2" fill="#000"/><rect x="7" y="13.6" width="2" height="2.2" fill="#000"/><circle cx="7.9" cy="7.9" r="1" fill="#000"/><line x1="10.5" y1="3.2" x2="10.5" y2="13.2" stroke="#7a827a" stroke-width="1"/><line x1="12.3" y1="5.6" x2="14.7" y2="3.2" stroke="#6c786c" stroke-width="0.9"/><line x1="12.3" y1="8.3" x2="15.8" y2="8.3" stroke="#6c786c" stroke-width="1"/><line x1="12.3" y1="11" x2="14.7" y2="13.5" stroke="#6c786c" stroke-width="0.9"/></svg>
<div class="t r" style="left:31px;top:7px;width:93px;font-size:12px;letter-spacing:0.2px">20:23:43</div>
<div class="t r" style="left:128px;top:7px;width:54px;font-size:12px">:09</div>
<div class="t c" style="left:187px;top:7px;width:83px;font-size:12px">LANCER</div>
<div class="t c" style="left:270px;top:7px;width:53px;font-size:12px;letter-spacing:0.3px">045004</div>
<div class="t" style="left:329px;top:7px;font-size:12px;letter-spacing:0.12px">Rivendell</div>
</div>
<div class="a" style="left:0;top:26px;width:496px;height:26px;background:#ccffcc">
<svg class="a" style="left:8px;top:5px" width="17" height="17" viewBox="0 0 17 17"><polygon points="0.4,5.4 7.6,0.6 8,15.6 0.4,9.6" fill="#e6e87a"/><line x1="0.4" y1="5.5" x2="7.8" y2="0.6" stroke="#5a5a20" stroke-width="1" stroke-dasharray="1.2,0.6"/><line x1="0.4" y1="9.5" x2="8.2" y2="15.4" stroke="#000" stroke-width="1.2" stroke-dasharray="1.4,0.4"/><line x1="0.6" y1="5.4" x2="0.6" y2="9.6" stroke="#6a6a28" stroke-width="1"/><path d="M7.2,2.5 L9.8,3.2 L10,13.2 L7.2,13.6 Z" fill="#fff"/><line x1="6.6" y1="3.2" x2="6.6" y2="13.2" stroke="#000" stroke-width="1.2"/><rect x="7" y="0.2" width="2.3" height="2" fill="#000"/><rect x="7" y="13.6" width="2" height="2.2" fill="#000"/><circle cx="7.9" cy="7.9" r="1" fill="#000"/><line x1="10.5" y1="3.2" x2="10.5" y2="13.2" stroke="#7a827a" stroke-width="1"/><line x1="12.3" y1="5.6" x2="14.7" y2="3.2" stroke="#6c786c" stroke-width="0.9"/><line x1="12.3" y1="8.3" x2="15.8" y2="8.3" stroke="#6c786c" stroke-width="1"/><line x1="12.3" y1="11" x2="14.7" y2="13.5" stroke="#6c786c" stroke-width="0.9"/></svg>
<div class="t r" style="left:128px;top:7px;width:54px;font-size:12px">5:38</div>
<div class="t c" style="left:187px;top:7px;width:83px;font-size:12px">ENCHAINER</div>
<div class="t c" style="left:270px;top:7px;width:53px;font-size:12px;letter-spacing:0.3px">010009</div>
<div class="t" style="left:329px;top:7px;font-size:12px;letter-spacing:0.12px">No Good Time Fairies</div>
<div class="t" style="left:493.5px;top:7px;font-size:12px">S</div>
</div>
<div class="a" style="left:0;top:52px;width:496px;height:26px;background:#ccffcc">
<svg class="a" style="left:8px;top:5px" width="17" height="17" viewBox="0 0 17 17"><polygon points="0.4,5.4 7.6,0.6 8,15.6 0.4,9.6" fill="#e6e87a"/><line x1="0.4" y1="5.5" x2="7.8" y2="0.6" stroke="#5a5a20" stroke-width="1" stroke-dasharray="1.2,0.6"/><line x1="0.4" y1="9.5" x2="8.2" y2="15.4" stroke="#000" stroke-width="1.2" stroke-dasharray="1.4,0.4"/><line x1="0.6" y1="5.4" x2="0.6" y2="9.6" stroke="#6a6a28" stroke-width="1"/><path d="M7.2,2.5 L9.8,3.2 L10,13.2 L7.2,13.6 Z" fill="#fff"/><line x1="6.6" y1="3.2" x2="6.6" y2="13.2" stroke="#000" stroke-width="1.2"/><rect x="7" y="0.2" width="2.3" height="2" fill="#000"/><rect x="7" y="13.6" width="2" height="2.2" fill="#000"/><circle cx="7.9" cy="7.9" r="1" fill="#000"/><line x1="10.5" y1="3.2" x2="10.5" y2="13.2" stroke="#7a827a" stroke-width="1"/><line x1="12.3" y1="5.6" x2="14.7" y2="3.2" stroke="#6c786c" stroke-width="0.9"/><line x1="12.3" y1="8.3" x2="15.8" y2="8.3" stroke="#6c786c" stroke-width="1"/><line x1="12.3" y1="11" x2="14.7" y2="13.5" stroke="#6c786c" stroke-width="0.9"/></svg>
<div class="t r" style="left:128px;top:7px;width:54px;font-size:12px">:09</div>
<div class="t c" style="left:187px;top:7px;width:83px;font-size:12px">LANCER</div>
<div class="t c" style="left:270px;top:7px;width:53px;font-size:12px;letter-spacing:0.3px">045004</div>
<div class="t" style="left:329px;top:7px;font-size:12px;letter-spacing:0.12px">Rivendell</div>
</div>
<div class="a" style="left:0;top:78px;width:496px;height:26px;background:#ccffcc">
<svg class="a" style="left:8px;top:5px" width="17" height="17" viewBox="0 0 17 17"><polygon points="0.4,5.4 7.6,0.6 8,15.6 0.4,9.6" fill="#e6e87a"/><line x1="0.4" y1="5.5" x2="7.8" y2="0.6" stroke="#5a5a20" stroke-width="1" stroke-dasharray="1.2,0.6"/><line x1="0.4" y1="9.5" x2="8.2" y2="15.4" stroke="#000" stroke-width="1.2" stroke-dasharray="1.4,0.4"/><line x1="0.6" y1="5.4" x2="0.6" y2="9.6" stroke="#6a6a28" stroke-width="1"/><path d="M7.2,2.5 L9.8,3.2 L10,13.2 L7.2,13.6 Z" fill="#fff"/><line x1="6.6" y1="3.2" x2="6.6" y2="13.2" stroke="#000" stroke-width="1.2"/><rect x="7" y="0.2" width="2.3" height="2" fill="#000"/><rect x="7" y="13.6" width="2" height="2.2" fill="#000"/><circle cx="7.9" cy="7.9" r="1" fill="#000"/><line x1="10.5" y1="3.2" x2="10.5" y2="13.2" stroke="#7a827a" stroke-width="1"/><line x1="12.3" y1="5.6" x2="14.7" y2="3.2" stroke="#6c786c" stroke-width="0.9"/><line x1="12.3" y1="8.3" x2="15.8" y2="8.3" stroke="#6c786c" stroke-width="1"/><line x1="12.3" y1="11" x2="14.7" y2="13.5" stroke="#6c786c" stroke-width="0.9"/></svg>
<div class="t r" style="left:128px;top:7px;width:54px;font-size:12px">21:27</div>
<div class="t c" style="left:187px;top:7px;width:83px;font-size:12px">ENCHAINER</div>
<div class="t c" style="left:270px;top:7px;width:53px;font-size:12px;letter-spacing:0.3px">010001</div>
<div class="t" style="left:329px;top:7px;font-size:12px;letter-spacing:0.12px">Symphony No.34 in C major</div>
<div class="t" style="left:493.5px;top:7px;font-size:12px">M</div>
</div>
<div class="a" style="left:0;top:104px;width:496px;height:26px;background:#ccffcc">
<svg class="a" style="left:8px;top:5px" width="17" height="17" viewBox="0 0 17 17"><polygon points="0.4,5.4 7.6,0.6 8,15.6 0.4,9.6" fill="#e6e87a"/><line x1="0.4" y1="5.5" x2="7.8" y2="0.6" stroke="#5a5a20" stroke-width="1" stroke-dasharray="1.2,0.6"/><line x1="0.4" y1="9.5" x2="8.2" y2="15.4" stroke="#000" stroke-width="1.2" stroke-dasharray="1.4,0.4"/><line x1="0.6" y1="5.4" x2="0.6" y2="9.6" stroke="#6a6a28" stroke-width="1"/><path d="M7.2,2.5 L9.8,3.2 L10,13.2 L7.2,13.6 Z" fill="#fff"/><line x1="6.6" y1="3.2" x2="6.6" y2="13.2" stroke="#000" stroke-width="1.2"/><rect x="7" y="0.2" width="2.3" height="2" fill="#000"/><rect x="7" y="13.6" width="2" height="2.2" fill="#000"/><circle cx="7.9" cy="7.9" r="1" fill="#000"/><line x1="10.5" y1="3.2" x2="10.5" y2="13.2" stroke="#7a827a" stroke-width="1"/><line x1="12.3" y1="5.6" x2="14.7" y2="3.2" stroke="#6c786c" stroke-width="0.9"/><line x1="12.3" y1="8.3" x2="15.8" y2="8.3" stroke="#6c786c" stroke-width="1"/><line x1="12.3" y1="11" x2="14.7" y2="13.5" stroke="#6c786c" stroke-width="0.9"/></svg>
<div class="t r" style="left:128px;top:7px;width:54px;font-size:12px">:09</div>
<div class="t c" style="left:187px;top:7px;width:83px;font-size:12px">LANCER</div>
<div class="t c" style="left:270px;top:7px;width:53px;font-size:12px;letter-spacing:0.3px">045004</div>
<div class="t" style="left:329px;top:7px;font-size:12px;letter-spacing:0.12px">Rivendell</div>
</div>
<div class="a" style="left:0;top:130px;width:496px;height:26px;background:#ccffcc">
<svg class="a" style="left:8px;top:5px" width="17" height="17" viewBox="0 0 17 17"><polygon points="0.4,5.4 7.6,0.6 8,15.6 0.4,9.6" fill="#e6e87a"/><line x1="0.4" y1="5.5" x2="7.8" y2="0.6" stroke="#5a5a20" stroke-width="1" stroke-dasharray="1.2,0.6"/><line x1="0.4" y1="9.5" x2="8.2" y2="15.4" stroke="#000" stroke-width="1.2" stroke-dasharray="1.4,0.4"/><line x1="0.6" y1="5.4" x2="0.6" y2="9.6" stroke="#6a6a28" stroke-width="1"/><path d="M7.2,2.5 L9.8,3.2 L10,13.2 L7.2,13.6 Z" fill="#fff"/><line x1="6.6" y1="3.2" x2="6.6" y2="13.2" stroke="#000" stroke-width="1.2"/><rect x="7" y="0.2" width="2.3" height="2" fill="#000"/><rect x="7" y="13.6" width="2" height="2.2" fill="#000"/><circle cx="7.9" cy="7.9" r="1" fill="#000"/><line x1="10.5" y1="3.2" x2="10.5" y2="13.2" stroke="#7a827a" stroke-width="1"/><line x1="12.3" y1="5.6" x2="14.7" y2="3.2" stroke="#6c786c" stroke-width="0.9"/><line x1="12.3" y1="8.3" x2="15.8" y2="8.3" stroke="#6c786c" stroke-width="1"/><line x1="12.3" y1="11" x2="14.7" y2="13.5" stroke="#6c786c" stroke-width="0.9"/></svg>
<div class="t r" style="left:128px;top:7px;width:54px;font-size:12px">5:14</div>
<div class="t c" style="left:187px;top:7px;width:83px;font-size:12px">ENCHAINER</div>
<div class="t c" style="left:270px;top:7px;width:53px;font-size:12px;letter-spacing:0.3px">010003</div>
<div class="t" style="left:329px;top:7px;font-size:12px;letter-spacing:0.12px">Wights Waits For Weights</div>
<div class="t" style="left:493.5px;top:7px;font-size:12px">S</div>
</div>
<div class="a" style="left:0;top:156px;width:496px;height:26px;background:#ccffcc">
<svg class="a" style="left:8px;top:5px" width="17" height="17" viewBox="0 0 17 17"><polygon points="0.4,5.4 7.6,0.6 8,15.6 0.4,9.6" fill="#e6e87a"/><line x1="0.4" y1="5.5" x2="7.8" y2="0.6" stroke="#5a5a20" stroke-width="1" stroke-dasharray="1.2,0.6"/><line x1="0.4" y1="9.5" x2="8.2" y2="15.4" stroke="#000" stroke-width="1.2" stroke-dasharray="1.4,0.4"/><line x1="0.6" y1="5.4" x2="0.6" y2="9.6" stroke="#6a6a28" stroke-width="1"/><path d="M7.2,2.5 L9.8,3.2 L10,13.2 L7.2,13.6 Z" fill="#fff"/><line x1="6.6" y1="3.2" x2="6.6" y2="13.2" stroke="#000" stroke-width="1.2"/><rect x="7" y="0.2" width="2.3" height="2" fill="#000"/><rect x="7" y="13.6" width="2" height="2.2" fill="#000"/><circle cx="7.9" cy="7.9" r="1" fill="#000"/><line x1="10.5" y1="3.2" x2="10.5" y2="13.2" stroke="#7a827a" stroke-width="1"/><line x1="12.3" y1="5.6" x2="14.7" y2="3.2" stroke="#6c786c" stroke-width="0.9"/><line x1="12.3" y1="8.3" x2="15.8" y2="8.3" stroke="#6c786c" stroke-width="1"/><line x1="12.3" y1="11" x2="14.7" y2="13.5" stroke="#6c786c" stroke-width="0.9"/></svg>
<div class="t r" style="left:128px;top:7px;width:54px;font-size:12px">:09</div>
<div class="t c" style="left:187px;top:7px;width:83px;font-size:12px">ENCHAINER</div>
<div class="t c" style="left:270px;top:7px;width:53px;font-size:12px;letter-spacing:0.3px">045004</div>
<div class="t" style="left:329px;top:7px;font-size:12px;letter-spacing:0.12px">Rivendell</div>
</div>
<div class="a" style="left:0;top:182px;width:496px;height:26px;background:#ccffcc">
<svg class="a" style="left:8px;top:5px" width="17" height="17" viewBox="0 0 17 17"><polygon points="0.4,5.4 7.6,0.6 8,15.6 0.4,9.6" fill="#e6e87a"/><line x1="0.4" y1="5.5" x2="7.8" y2="0.6" stroke="#5a5a20" stroke-width="1" stroke-dasharray="1.2,0.6"/><line x1="0.4" y1="9.5" x2="8.2" y2="15.4" stroke="#000" stroke-width="1.2" stroke-dasharray="1.4,0.4"/><line x1="0.6" y1="5.4" x2="0.6" y2="9.6" stroke="#6a6a28" stroke-width="1"/><path d="M7.2,2.5 L9.8,3.2 L10,13.2 L7.2,13.6 Z" fill="#fff"/><line x1="6.6" y1="3.2" x2="6.6" y2="13.2" stroke="#000" stroke-width="1.2"/><rect x="7" y="0.2" width="2.3" height="2" fill="#000"/><rect x="7" y="13.6" width="2" height="2.2" fill="#000"/><circle cx="7.9" cy="7.9" r="1" fill="#000"/><line x1="10.5" y1="3.2" x2="10.5" y2="13.2" stroke="#7a827a" stroke-width="1"/><line x1="12.3" y1="5.6" x2="14.7" y2="3.2" stroke="#6c786c" stroke-width="0.9"/><line x1="12.3" y1="8.3" x2="15.8" y2="8.3" stroke="#6c786c" stroke-width="1"/><line x1="12.3" y1="11" x2="14.7" y2="13.5" stroke="#6c786c" stroke-width="0.9"/></svg>
<div class="t r" style="left:128px;top:7px;width:54px;font-size:12px">36:10</div>
<div class="t c" style="left:187px;top:7px;width:83px;font-size:12px">ENCHAINER</div>
<div class="t c" style="left:270px;top:7px;width:53px;font-size:12px;letter-spacing:0.3px">010002</div>
<div class="t" style="left:329px;top:7px;font-size:12px;letter-spacing:0.12px">Symphony No.41 in C major</div>
<div class="t" style="left:493.5px;top:7px;font-size:12px">M</div>
</div>
<div class="a" style="left:0;top:208px;width:496px;height:26px;background:#fff">
<svg class="a" style="left:8px;top:5px" width="17" height="17" viewBox="0 0 17 17"><polygon points="0.4,5.4 7.6,0.6 8,15.6 0.4,9.6" fill="#e6e87a"/><line x1="0.4" y1="5.5" x2="7.8" y2="0.6" stroke="#5a5a20" stroke-width="1" stroke-dasharray="1.2,0.6"/><line x1="0.4" y1="9.5" x2="8.2" y2="15.4" stroke="#000" stroke-width="1.2" stroke-dasharray="1.4,0.4"/><line x1="0.6" y1="5.4" x2="0.6" y2="9.6" stroke="#6a6a28" stroke-width="1"/><path d="M7.2,2.5 L9.8,3.2 L10,13.2 L7.2,13.6 Z" fill="#fff"/><line x1="6.6" y1="3.2" x2="6.6" y2="13.2" stroke="#000" stroke-width="1.2"/><rect x="7" y="0.2" width="2.3" height="2" fill="#000"/><rect x="7" y="13.6" width="2" height="2.2" fill="#000"/><circle cx="7.9" cy="7.9" r="1" fill="#000"/><line x1="10.5" y1="3.2" x2="10.5" y2="13.2" stroke="#7a827a" stroke-width="1"/><line x1="12.3" y1="5.6" x2="14.7" y2="3.2" stroke="#6c786c" stroke-width="0.9"/><line x1="12.3" y1="8.3" x2="15.8" y2="8.3" stroke="#6c786c" stroke-width="1"/><line x1="12.3" y1="11" x2="14.7" y2="13.5" stroke="#6c786c" stroke-width="0.9"/></svg>
<div class="t r" style="left:128px;top:7px;width:54px;font-size:12px">:09</div>
<div class="t c" style="left:187px;top:7px;width:83px;font-size:12px">LANCER</div>
<div class="t c" style="left:270px;top:7px;width:53px;font-size:12px;letter-spacing:0.3px">045004</div>
<div class="t" style="left:329px;top:7px;font-size:12px;letter-spacing:0.12px">Rivendell</div>
</div>
<div class="a" style="left:0;top:234px;width:496px;height:26px;background:#fff">
<svg class="a" style="left:8px;top:5px" width="17" height="17" viewBox="0 0 17 17"><polygon points="0.4,5.4 7.6,0.6 8,15.6 0.4,9.6" fill="#e6e87a"/><line x1="0.4" y1="5.5" x2="7.8" y2="0.6" stroke="#5a5a20" stroke-width="1" stroke-dasharray="1.2,0.6"/><line x1="0.4" y1="9.5" x2="8.2" y2="15.4" stroke="#000" stroke-width="1.2" stroke-dasharray="1.4,0.4"/><line x1="0.6" y1="5.4" x2="0.6" y2="9.6" stroke="#6a6a28" stroke-width="1"/><path d="M7.2,2.5 L9.8,3.2 L10,13.2 L7.2,13.6 Z" fill="#fff"/><line x1="6.6" y1="3.2" x2="6.6" y2="13.2" stroke="#000" stroke-width="1.2"/><rect x="7" y="0.2" width="2.3" height="2" fill="#000"/><rect x="7" y="13.6" width="2" height="2.2" fill="#000"/><circle cx="7.9" cy="7.9" r="1" fill="#000"/><line x1="10.5" y1="3.2" x2="10.5" y2="13.2" stroke="#7a827a" stroke-width="1"/><line x1="12.3" y1="5.6" x2="14.7" y2="3.2" stroke="#6c786c" stroke-width="0.9"/><line x1="12.3" y1="8.3" x2="15.8" y2="8.3" stroke="#6c786c" stroke-width="1"/><line x1="12.3" y1="11" x2="14.7" y2="13.5" stroke="#6c786c" stroke-width="0.9"/></svg>
<div class="t r" style="left:128px;top:7px;width:54px;font-size:12px">5:38</div>
<div class="t c" style="left:187px;top:7px;width:83px;font-size:12px">ENCHAINER</div>
<div class="t c" style="left:270px;top:7px;width:53px;font-size:12px;letter-spacing:0.3px">010004</div>
<div class="t" style="left:329px;top:7px;font-size:12px;letter-spacing:0.12px">Another Level</div>
<div class="t" style="left:493.5px;top:7px;font-size:12px">S</div>
</div>
<div class="a" style="left:0;top:260px;width:496px;height:26px;background:#fff">
<svg class="a" style="left:8px;top:5px" width="16" height="16"><rect width="16" height="16" fill="#000"/><circle cx="7.6" cy="7.6" r="6.4" fill="#eef048" stroke="#f0f890" stroke-width="1"/><text x="7.4" y="11.7" font-family="Liberation Serif" font-weight="bold" font-size="11.5" text-anchor="middle" fill="#000">C</text></svg>
<div class="t c" style="left:187px;top:7px;width:83px;font-size:12px">LANCER</div>
<div class="t c" style="left:270px;top:7px;width:53px;font-size:12px;letter-spacing:0.3px">LIER A</div>
<div class="t" style="left:329px;top:7px;font-size:12px;letter-spacing:0.12px">Music</div>
<div class="t" style="left:493.5px;top:7px;font-size:12px">F</div>
</div>
<div class="t" style="left:329px;top:295px;font-size:12px">-- fin du log --</div>
</div>
<div class="a" style="left:512px;top:533px;width:496px;height:16px;background:repeating-conic-gradient(#e2deda 0 25%,#fbfaf9 0 50%) 0 0/2px 2px"></div>
<div class="a" style="left:512px;top:533px;width:16px;height:14px;background:#efebe7;border-right:1px solid #000;border-bottom:1px solid #000"></div>
<div class="a" style="left:511px;top:547px;width:214px;height:2px;background:#fbfaf9"></div>
<div class="a" style="left:517px;top:537px;width:0;height:0;border-top:3.5px solid transparent;border-bottom:3.5px solid transparent;border-right:4px solid #000"></div>
<div class="a" style="left:528px;top:533px;width:197px;height:14px;background:#efebe7;border-right:1px solid #000;border-bottom:1px solid #000;box-shadow:inset -1px -1px 0 #a09c98"></div>
<div class="a" style="left:992px;top:533px;width:16px;height:14px;background:#efebe7;border-right:1px solid #000;border-bottom:1px solid #000;box-shadow:inset -1px -1px 0 #a09c98"></div>
<div class="a" style="left:998px;top:537px;width:0;height:0;border-top:3.5px solid transparent;border-bottom:3.5px solid transparent;border-left:4px solid #000"></div>
<div class="a" style="left:510px;top:550px;width:500px;height:120px;background:#c0c0c0;"></div>
<div class="rz" style="left:520px;top:557px;width:80px;height:50px;background:#efebe7;"></div>
<div class="t b c" style="left:520px;top:564.45px;width:80px;font-size:14px;color:#000;letter-spacing:0.2px">Ecouter</div>
<div class="t b c" style="left:520px;top:584.45px;width:80px;font-size:14px;color:#000;letter-spacing:0.2px">le Début</div>
<div class="rz" style="left:600px;top:557px;width:80px;height:50px;background:#efebe7;"></div>
<div class="t b c" style="left:600px;top:564.45px;width:80px;font-size:14px;color:#000;letter-spacing:0.2px">Ecouter</div>
<div class="t b c" style="left:600px;top:584.45px;width:80px;font-size:14px;color:#000;letter-spacing:0.2px">la Fin</div>
<div class="rz" style="left:520px;top:615px;width:80px;height:50px;background:#efebe7;"></div>
<div class="t b c" style="left:520px;top:632.45px;width:80px;font-size:14px;color:#8c8c8c;letter-spacing:0.2px">Lancer</div>
<div class="rz" style="left:600px;top:615px;width:80px;height:50px;background:#efebe7;"></div>
<div class="t b c" style="left:600px;top:622.45px;width:80px;font-size:14px;color:#8c8c8c;letter-spacing:0.2px">Utiliser</div>
<div class="t b c" style="left:600px;top:642.45px;width:80px;font-size:14px;color:#8c8c8c;letter-spacing:0.2px">Ensuite</div>
<div class="rz" style="left:680px;top:615px;width:80px;height:50px;background:#efebe7;"></div>
<div class="t b c" style="left:680px;top:632.45px;width:80px;font-size:14px;color:#8c8c8c;letter-spacing:0.2px">Modifier</div>
<div class="rz" style="left:760px;top:615px;width:80px;height:50px;background:#0000ff;box-shadow:inset -1px -1px 0 #8080ff"></div>
<div class="t b c" style="left:760px;top:632.45px;width:80px;font-size:14px;color:#fff;letter-spacing:0.2px">Dérouler</div>
<div class="rz" style="left:840px;top:615px;width:80px;height:50px;background:#efebe7;"></div>
<div class="t b c" style="left:840px;top:622.45px;width:80px;font-size:14px;color:#8c8c8c;letter-spacing:0.2px">Rafraichir</div>
<div class="t b c" style="left:840px;top:642.45px;width:80px;font-size:14px;color:#8c8c8c;letter-spacing:0.2px">le Log</div>
<div class="rz" style="left:920px;top:615px;width:80px;height:50px;background:#efebe7;"></div>
<div class="t b c" style="left:920px;top:622.45px;width:80px;font-size:14px;color:#000;letter-spacing:0.2px">Choisir</div>
<div class="t b c" style="left:920px;top:642.45px;width:80px;font-size:14px;color:#000;letter-spacing:0.2px">un Log</div>
<div class="a" style="left:849px;top:559px;width:137px;height:54px;border:1px solid #000"></div>
<div class="a" style="left:880px;top:552px;width:75px;height:12px;background:#c0c0c0;"></div>
<div class="t b c" style="left:849px;top:553.84px;width:137px;font-size:12px;">Durées</div>
<div class="t b r" style="left:800px;top:572.64px;width:113.5px;font-size:12px;">Sélection:</div>
<div class="t b r" style="left:800px;top:592.84px;width:113.8px;font-size:12px;letter-spacing:-0.3px">Fin du Log:</div>
<div class="a" style="left:920px;top:570px;width:60px;height:18px;background:#fff;border:1px solid #fff;border-top-color:#808080;border-left-color:#808080;box-shadow:inset 1px 1px 0 #000"></div>
<div class="a" style="left:920px;top:590px;width:60px;height:18px;background:#fff;border:1px solid #fff;border-top-color:#808080;border-left-color:#808080;box-shadow:inset 1px 1px 0 #000"></div>
<div class="rz" style="left:10px;top:673px;width:80px;height:60px;background:#efebe7;"></div>
<div class="t b c" style="left:10px;top:694.76px;width:80px;font-size:16px;color:#000;letter-spacing:0.2px">Ajouter</div>
<div class="rz" style="left:100px;top:673px;width:80px;height:60px;background:#efebe7;"></div>
<div class="t b c" style="left:100px;top:694.76px;width:80px;font-size:16px;color:#000;letter-spacing:0.2px">Suppr</div>
<div class="rz" style="left:190px;top:673px;width:80px;height:60px;background:#efebe7;"></div>
<div class="t b c" style="left:190px;top:694.76px;width:80px;font-size:16px;color:#000;letter-spacing:0.2px">Déplacer</div>
<div class="rz" style="left:280px;top:673px;width:80px;height:60px;background:#efebe7;"></div>
<div class="t b c" style="left:280px;top:694.76px;width:80px;font-size:16px;color:#000;letter-spacing:0.2px">Copier</div>
<div class="rz" style="left:520px;top:673px;width:80px;height:60px;background:#efebe7;"></div>
<div class="t b c" style="left:520px;top:684.11px;width:80px;font-size:16px;color:#000;letter-spacing:0.2px">Panneau</div>
<div class="t b c" style="left:520px;top:705.41px;width:80px;font-size:16px;color:#000;letter-spacing:0.2px">de sons</div>
<div class="rz" style="left:610px;top:673px;width:127px;height:60px;background:#0000ff;box-shadow:inset -1px -1px 0 #8080ff"></div>
<div class="t b c" style="left:610px;top:684.11px;width:127px;font-size:16px;color:#fff;letter-spacing:0.2px">Log Principal</div>
<div class="t b c" style="left:610px;top:705.41px;width:127px;font-size:16px;color:#fff;letter-spacing:0.2px">[Music]</div>
<div class="rz" style="left:747px;top:673px;width:127px;height:60px;background:#efebe7;"></div>
<div class="t b c" style="left:747px;top:684.11px;width:127px;font-size:16px;color:#000;letter-spacing:0.2px">Log Aux 1</div>
<div class="t b c" style="left:747px;top:705.41px;width:127px;font-size:16px;color:#000;letter-spacing:0.2px">[--]</div>
<div class="rz" style="left:884px;top:673px;width:127px;height:60px;background:#efebe7;"></div>
<div class="t b c" style="left:884px;top:684.11px;width:127px;font-size:16px;color:#000;letter-spacing:0.2px">Log Aux 2</div>
<div class="t b c" style="left:884px;top:705.41px;width:127px;font-size:16px;color:#000;letter-spacing:0.2px">[--]</div>
</div></body></html>
